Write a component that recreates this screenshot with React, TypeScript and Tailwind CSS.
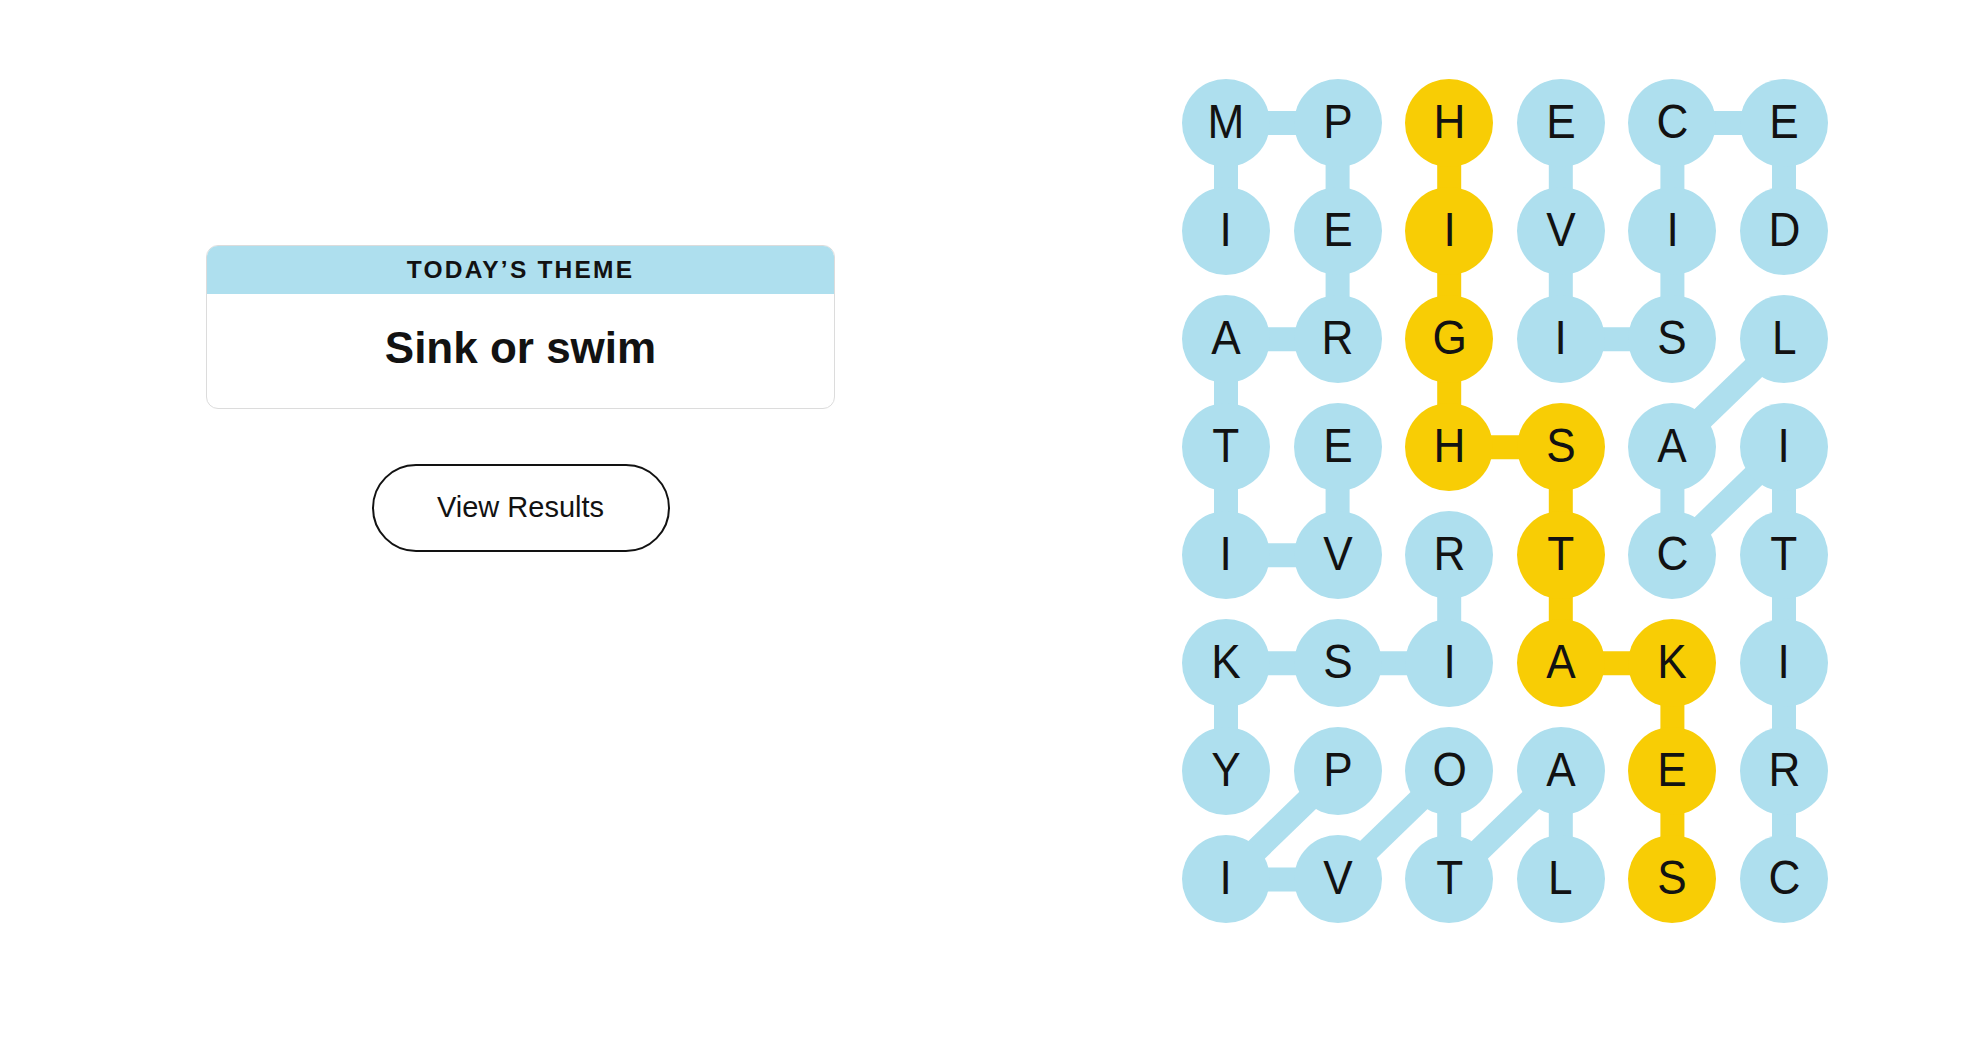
import React from 'react';

const BLUE = '#aedfee';
const YELLOW = '#f8cd05';

// board letters, row by row
const rows = ['MPHECE', 'IEIVID', 'ARGISL', 'TEHSAI', 'IVRTCT', 'KSIAKI', 'YPOAER', 'IVTLSC'];

// cells that belong to the spangram
const spangram = [
  [0, 2], [1, 2], [2, 2], [3, 2], [3, 3], [4, 3], [5, 3], [5, 4], [6, 4], [7, 4],
];

// found words as paths of [row, col]
const words: { path: number[][]; color: string }[] = [
  // IMPERATIVE
  { path: [[1, 0], [0, 0], [0, 1], [1, 1], [2, 1], [2, 0], [3, 0], [4, 0], [4, 1], [3, 1]], color: BLUE },
  // DECISIVE
  { path: [[1, 5], [0, 5], [0, 4], [1, 4], [2, 4], [2, 3], [1, 3], [0, 3]], color: BLUE },
  // CRITICAL
  { path: [[7, 5], [6, 5], [5, 5], [4, 5], [3, 5], [4, 4], [3, 4], [2, 5]], color: BLUE },
  // RISKY
  { path: [[4, 2], [5, 2], [5, 1], [5, 0], [6, 0]], color: BLUE },
  // PIVOTAL
  { path: [[6, 1], [7, 0], [7, 1], [6, 2], [7, 2], [6, 3], [7, 3]], color: BLUE },
  // HIGHSTAKES
  { path: spangram, color: YELLOW },
];

const SIZE = 88;
const COL_STEP = 111.6;
const ROW_STEP = 108.07;

const cx = (c: number) => SIZE / 2 + c * COL_STEP;
const cy = (r: number) => SIZE / 2 + r * ROW_STEP;

const isSpangram = (r: number, c: number) => spangram.some(([a, b]) => a === r && b === c);

const Board = () => {
  const width = SIZE + 5 * COL_STEP;
  const height = SIZE + 7 * ROW_STEP;

  return (
    <div className="relative" style={{ width, height }}>
      {/* connectors between letters */}
      <svg className="absolute inset-0" width={width} height={height}>
        {words.map((w, i) =>
          w.path.slice(1).map(([r, c], j) => {
            const [pr, pc] = w.path[j];
            return (
              <line
                key={`${i}-${j}`}
                x1={cx(pc)}
                y1={cy(pr)}
                x2={cx(c)}
                y2={cy(r)}
                stroke={w.color}
                strokeWidth={24}
              />
            );
          })
        )}
      </svg>

      <div className="relative grid grid-cols-[repeat(6,88px)] gap-x-[23.6px] gap-y-[20.07px]">
        {rows.map((row, r) =>
          row.split('').map((ch, c) => (
            <div
              key={`${r}-${c}`}
              className={`w-[88px] h-[88px] rounded-full flex items-center justify-center text-[48px] leading-none text-[#121212] ${
                isSpangram(r, c) ? 'bg-[#f8cd05]' : 'bg-[#aedfee]'
              }`}
            >
              <span className="inline-block scale-x-[0.92] pb-[2px]">{ch}</span>
            </div>
          ))
        )}
      </div>
    </div>
  );
};

export default function App() {
  return (
    <div
      className="min-h-screen w-full bg-white flex items-start pt-[78.5px]"
      style={{ fontFamily: '"Liberation Sans", Arial, sans-serif' }}
    >
      {/* Theme card + results */}
      <div className="ml-[206px] w-[629px] mt-[166.5px] flex flex-col items-center">
        <div className="w-full rounded-[12px] border-[1.5px] border-[#dcdcdc] overflow-hidden">
          <div className="h-[48px] bg-[#aedfee] flex items-center justify-center">
            <span className="text-[24.5px] font-bold tracking-[2.2px] text-[#121212] leading-none pt-[1px]">
              TODAY’S THEME
            </span>
          </div>
          <div className="h-[114px] flex items-center justify-center pb-[7px]">
            <span className="text-[44px] font-bold text-[#121212] leading-none">Sink or swim</span>
          </div>
        </div>

        <button className="mt-[55px] w-[298px] h-[88px] rounded-full border-2 border-[#121212] bg-white text-[29px] text-[#121212] flex items-center justify-center">
          View Results
        </button>
      </div>

      {/* Board */}
      <div className="ml-[347px]">
        <Board />
      </div>
    </div>
  );
}
